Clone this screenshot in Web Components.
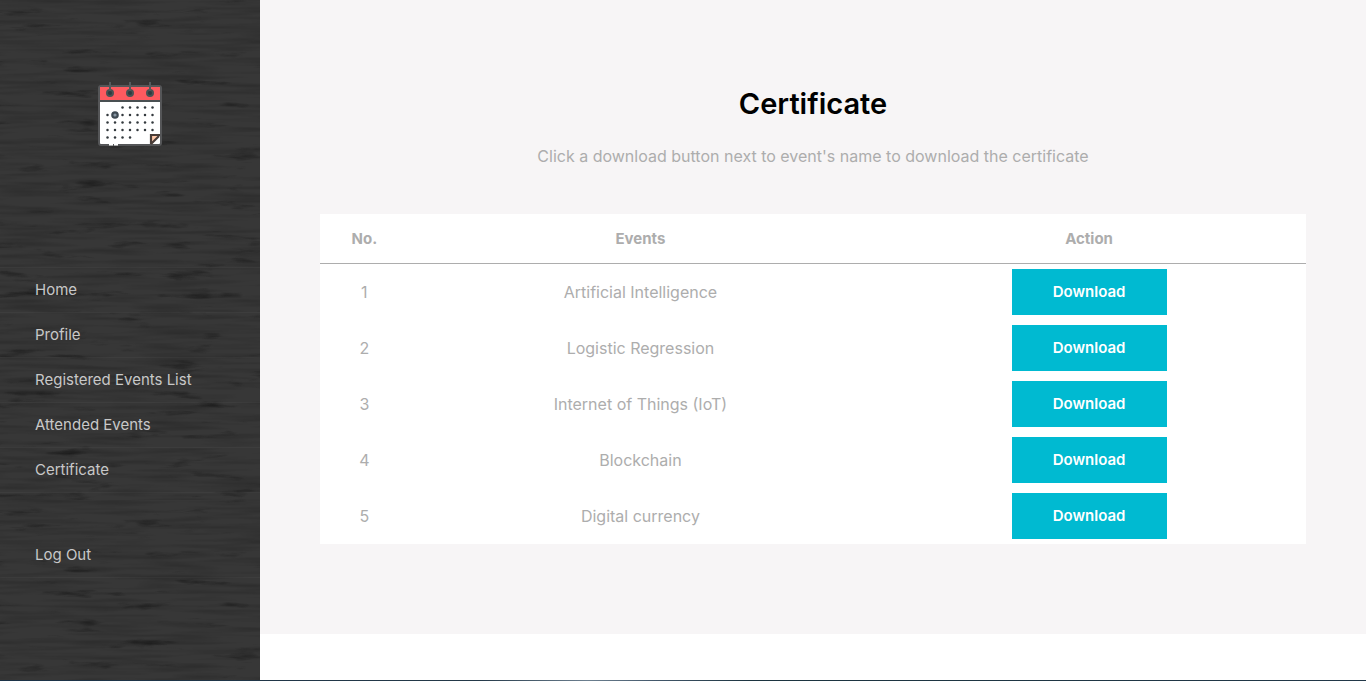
<!DOCTYPE html>
<html lang="en">
<head>
<meta charset="utf-8">
<meta name="viewport" content="width=device-width, initial-scale=1">
<title>Certificate</title>
<style>
  html, body { margin: 0; }
  body { font-family: Inter, "Open Sans", sans-serif; font-size: 15px; color: #adadad; background: #fff; }
</style>
</head>
<body>
<app-shell>
  <side-bar slot="side">
    <calendar-logo slot="logo"></calendar-logo>
    <nav-item href="#home">Home</nav-item>
    <nav-item href="#profile">Profile</nav-item>
    <nav-item href="#registered">Registered Events List</nav-item>
    <nav-item href="#attended">Attended Events</nav-item>
    <nav-item href="#certificate">Certificate</nav-item>
    <nav-item slot="end" href="#logout">Log Out</nav-item>
  </side-bar>
  <page-section>
    <span slot="title">Certificate</span>
    <span slot="intro">Click a download button next to event's name to download the certificate</span>
    <event-table></event-table>
  </page-section>
</app-shell>

<script>
const define = (name, html, setup) => customElements.define(name, class extends HTMLElement {
  constructor() {
    super();
    this.attachShadow({ mode: "open" }).innerHTML = html;
  }
  connectedCallback() { if (setup) setup(this, this.shadowRoot); }
});

define("app-shell", `
  <style>
    :host { display: flex; flex-direction: column; min-height: 100vh; }
    .row { flex: 1; display: flex; }
    main { flex: 1; min-width: 0; }
    .strip { height: 1px; background: linear-gradient(90deg, #1c3347, #243949 35%, #6d8090 43%, #43586b 48%, #1c3440 55%, #223848); }
  </style>
  <div class="row"><slot name="side"></slot><main><slot></slot></main></div>
  <div class="strip"></div>`);

define("side-bar", `
  <style>
    :host { display: grid; flex: 0 0 260px; background: #373737; overflow: hidden; }
    .wood, aside { grid-area: 1 / 1; min-width: 0; }
    .wood { width: 100%; height: 100%; min-height: 0; contain: size; }
    aside { z-index: 1; padding-top: 82px; }
    .logo { display: flex; justify-content: center; height: 185px; }
    nav { border-top: 1px solid #ffffff08; }
    .end { margin-top: 40px; }
  </style>
  <svg class="wood" aria-hidden="true">
    <defs>
      <filter id="fine" x="0" y="0" width="100%" height="100%" color-interpolation-filters="sRGB">
        <feTurbulence type="fractalNoise" baseFrequency=".014 .2" numOctaves="2" seed="8"/>
        <feColorMatrix values="0 0 0 0 0  0 0 0 0 0  0 0 0 0 0  .4 0 0 0 -.16"/>
      </filter>
      <filter id="streak" x="0" y="0" width="100%" height="100%" color-interpolation-filters="sRGB">
        <feTurbulence type="fractalNoise" baseFrequency=".018 .1" numOctaves="4" seed="23"/>
        <feColorMatrix values="0 0 0 0 .08  0 0 0 0 .08  0 0 0 0 .08  3.2 0 0 0 -2"/>
      </filter>
      <pattern id="grain" width="260" height="500" patternUnits="userSpaceOnUse">
        <rect width="260" height="500" filter="url(#fine)"/>
        <rect width="260" height="500" filter="url(#streak)" opacity=".7"/>
      </pattern>
    </defs>
    <rect width="100%" height="100%" fill="url(#grain)"/>
  </svg>
  <aside>
    <div class="logo"><slot name="logo"></slot></div>
    <nav aria-label="Main"><slot></slot><div class="end"><slot name="end"></slot></div></nav>
  </aside>`);

define("nav-item", `
  <style>
    :host { display: block; }
    a { display: flex; align-items: center; box-sizing: border-box; height: 45px; padding: 0 35px;
        border-bottom: 1px solid #ffffff08; color: #c8c8c8; text-decoration: none; font-size: 15px; line-height: 20px; white-space: nowrap; }
  </style>
  <a><slot></slot></a>`, (el, root) => {
    root.querySelector("a").setAttribute("href", el.getAttribute("href"));
  });

define("calendar-logo", `
  <style>:host { display: block; width: 64px; height: 64px; } svg { display: block; }</style>
  <svg width="64" height="64" viewBox="0 0 64 64" role="img" aria-label="Calendar">
    <rect x="1" y="4" width="62" height="59" rx="2" fill="#fff" stroke="#555658" stroke-width="2"/>
    <path d="M2 5H62V18H2Z" fill="#ff5a5f"/>
    <path d="M2 19H62" stroke="#495052" stroke-width="2"/>
    <g fill="#303b3f" stroke="#4a5254" stroke-width="2">
      <circle cx="12" cy="11" r="3"/><circle cx="32" cy="11" r="3"/><circle cx="52" cy="11" r="3"/>
    </g>
    <path d="M12 0V9M32 0V9M52 0V9" stroke="#555b5d" stroke-width="2"/>
    <g id="dots" fill="#343a3e"></g>
    <circle cx="17" cy="33" r="2.7" fill="#8796a3" stroke="#3e4952" stroke-width="2.2"/>
    <path d="M53 62V53H62L54 62Z" fill="#ffc9aa"/>
    <path d="M53 62V53H62M61 54L53 62" fill="none" stroke="#493d38" stroke-width="2.2"/>
    <path d="M11 62.5H15M16 62.5H20" fill="none" stroke="#fff" stroke-width="2"/>
  </svg>`, (el, root) => {
    const dots = root.querySelector("#dots");
    const rows = [[2, 6], [0, 6], [0, 6], [0, 6], [0, 3]];
    let out = "";
    rows.forEach(([from, to], r) => {
      for (let c = from; c <= to; c++) out += `<circle cx="${9.5 + c * 7.5}" cy="${25.5 + r * 7.5}" r="1.25"/>`;
    });
    dots.innerHTML = out;
  });

define("page-section", `
  <style>
    :host { display: block; background: #f7f5f6; padding: 84px 60px 90px; }
    h1 { margin: 0; text-align: center; font-size: 29px; line-height: 40px; font-weight: 600; color: #000; }
    p { margin: 20px 0 46px; text-align: center; font-size: 16px; line-height: 24px; }
  </style>
  <h1><slot name="title"></slot></h1>
  <p><slot name="intro"></slot></p>
  <slot></slot>`);

define("download-button", `
  <style>
    :host { display: block; }
    button { display: block; margin: 0 auto; min-width: 155px; height: 46px; padding: 0 40px; border: 0; background: #00bad1;
             color: #fff; font: inherit; font-size: 15px; font-weight: 600; line-height: 20px; cursor: pointer; }
  </style>
  <button type="button"><slot></slot></button>`);

define("event-table", `
  <style>
    :host { display: block; background: #fff; }
    table { width: 100%; table-layout: fixed; border-collapse: separate; border-spacing: 0; text-align: center; }
    col:nth-child(1) { width: 9%; } col:nth-child(2) { width: 47%; } col:nth-child(3) { width: 44%; }
    th { height: 49px; padding: 0; border-bottom: 1px solid #adadad; font-size: 15px; font-weight: 700; line-height: 24px; }
    td { height: 46px; padding: 5px 0; font-size: 16px; line-height: 24px; }
  </style>
  <table>
    <colgroup><col><col><col></colgroup>
    <thead><tr><th scope="col">No.</th><th scope="col">Events</th><th scope="col">Action</th></tr></thead>
    <tbody></tbody>
  </table>`, (el, root) => {
    const events = ["Artificial Intelligence", "Logistic Regression", "Internet of Things (IoT)", "Blockchain", "Digital currency"];
    root.querySelector("tbody").innerHTML = events.map((name, i) =>
      `<tr><td>${i + 1}</td><td>${name}</td><td><download-button>Download</download-button></td></tr>`).join("");
  });
</script>
</body>
</html>
